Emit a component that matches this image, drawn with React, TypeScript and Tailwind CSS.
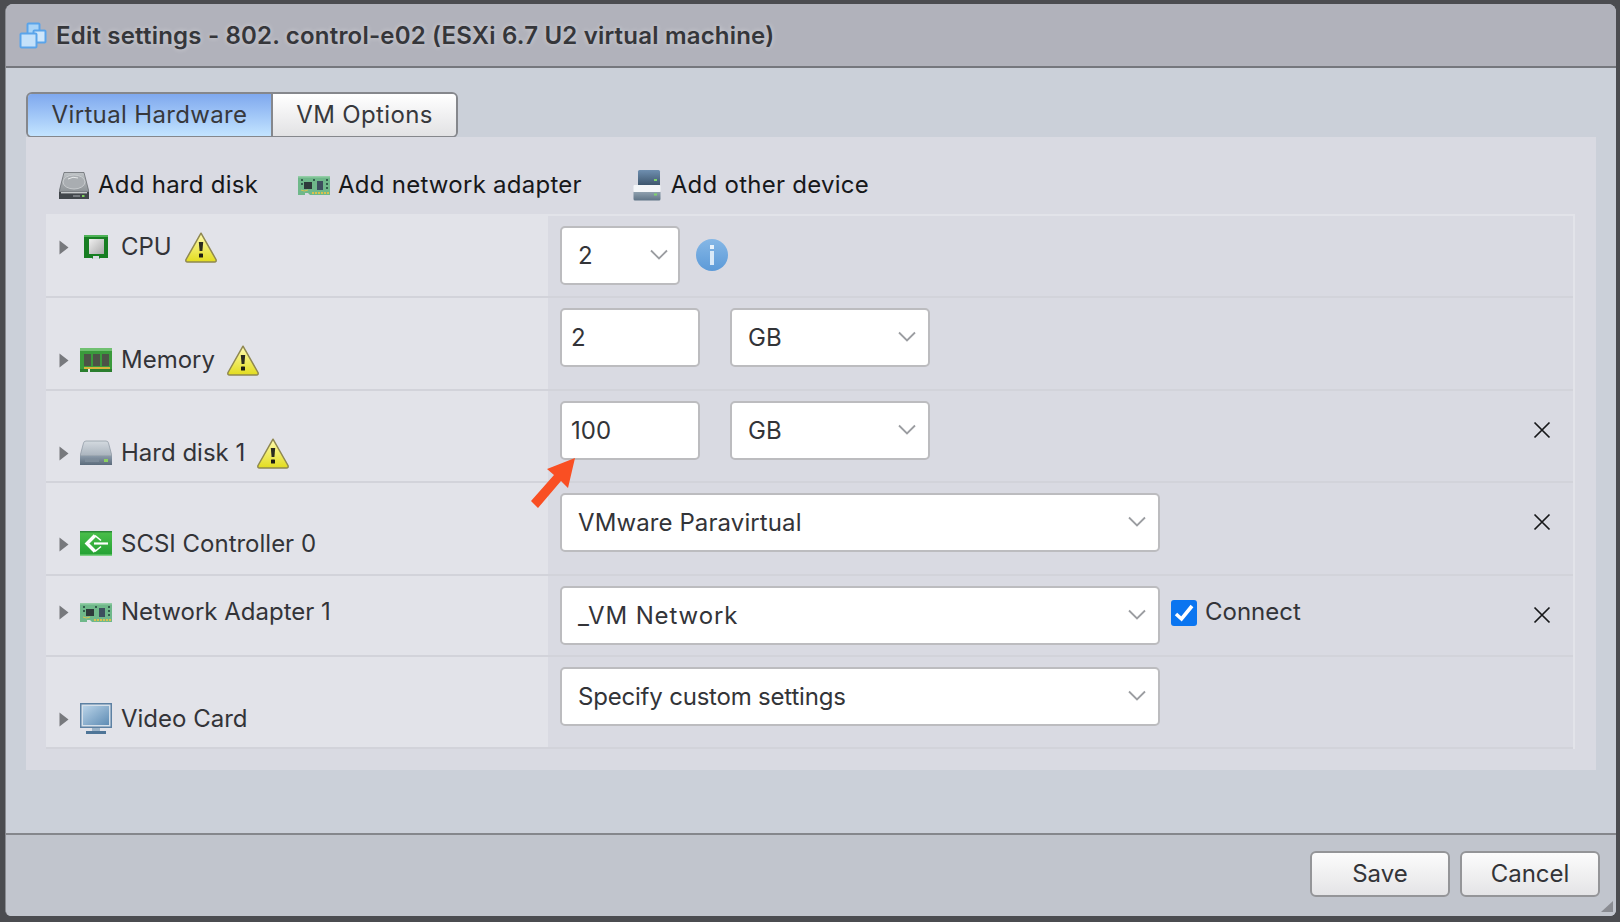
import React from "react";

const F = "font-['Inter','Liberation_Sans',sans-serif]";

function Caret() {
  return (
    <svg width="10" height="15" viewBox="0 0 10 15" className="shrink-0">
      <path d="M0.5 0.5 L9.5 7.5 L0.5 14.5 Z" fill="#77797d" />
    </svg>
  );
}

function Warn({ className = "" }: { className?: string }) {
  return (
    <svg width="32" height="31" viewBox="0 0 32 31" className={"shrink-0 " + className}>
      <defs>
        <linearGradient id="wg" x1="0" y1="0" x2="0" y2="1">
          <stop offset="0" stopColor="#fffbb0" />
          <stop offset="1" stopColor="#e2dc1e" />
        </linearGradient>
      </defs>
      <path d="M16 1.2 L31 27.5 Q31.7 30 29.5 30 L2.5 30 Q0.3 30 1 27.5 Z" fill="url(#wg)" stroke="#8f8850" strokeWidth="1.5" strokeLinejoin="round" />
      <path d="M13.8 10 L18.2 10 L17.4 19 L14.6 19 Z" fill="#2b2b20" />
      <rect x="14" y="21.5" width="4" height="4" rx="0.6" fill="#1d1d14" />
    </svg>
  );
}

function CpuIcon() {
  return (
    <svg width="32" height="26" viewBox="0 0 32 26" className="shrink-0">
      <defs>
        <linearGradient id="cg" x1="0" y1="0" x2="1" y2="1">
          <stop offset="0" stopColor="#f0f0f0" />
          <stop offset="1" stopColor="#a9a9a9" />
        </linearGradient>
      </defs>
      <path d="M4 1 H28 V24 H20 L19 25 H13 L12 24 H4 Z" fill="#177e22" />
      <path d="M4 1 H28 V3 H4 Z" fill="#4eb257" />
      <rect x="9" y="5" width="15" height="15" fill="url(#cg)" />
      <rect x="13" y="22" width="6" height="3" fill="#d8dbe0" />
    </svg>
  );
}

function MemoryIcon() {
  return (
    <svg width="32" height="26" viewBox="0 0 32 26" className="shrink-0">
      <rect x="0" y="1" width="32" height="23" fill="#3a9a3c" />
      <rect x="0" y="1" width="32" height="3" fill="#70c071" />
      <rect x="0" y="22" width="32" height="3" fill="#2a7e2e" />
      <rect x="4" y="7" width="7" height="12" fill="#4c5347" />
      <rect x="13" y="7" width="7" height="12" fill="#4c5347" />
      <rect x="22" y="7" width="7" height="12" fill="#4c5347" />
      <rect x="4" y="20" width="26" height="2" fill="#d7b33c" />
      <rect x="8" y="22" width="2" height="3" fill="#e2e3e9" />
    </svg>
  );
}

function DiskIcon() {
  return (
    <svg width="32" height="26" viewBox="0 0 32 26" className="shrink-0">
      <defs>
        <linearGradient id="dg" x1="0" y1="0" x2="0" y2="1">
          <stop offset="0" stopColor="#d4dae0" />
          <stop offset="1" stopColor="#a9b3bd" />
        </linearGradient>
        <linearGradient id="dg2" x1="0" y1="0" x2="0" y2="1">
          <stop offset="0" stopColor="#8b9aa9" />
          <stop offset="1" stopColor="#5b6b7b" />
        </linearGradient>
      </defs>
      <path d="M6 1 H26 Q28 1 28.5 3 L32 16 H0 L3.5 3 Q4 1 6 1 Z" fill="url(#dg)" stroke="#7d8a96" strokeWidth="0.6" />
      <rect x="0" y="16" width="32" height="9" fill="url(#dg2)" />
      <rect x="5" y="19" width="14" height="3" fill="#7d8c9a" />
      <rect x="24" y="19" width="4" height="3" fill="#8bd060" />
    </svg>
  );
}

function ScsiIcon() {
  return (
    <svg width="32" height="26" viewBox="0 0 32 26" className="shrink-0">
      <defs>
        <linearGradient id="sg" x1="0" y1="0" x2="0" y2="1">
          <stop offset="0" stopColor="#4cc04c" />
          <stop offset="1" stopColor="#22a032" />
        </linearGradient>
      </defs>
      <rect x="0" y="0" width="32" height="25" fill="url(#sg)" />
      <rect x="0" y="0" width="32" height="1.5" fill="#2c8a38" />
      <rect x="0" y="23.5" width="32" height="1.5" fill="#7ccf82" />
      <path d="M15 4.5 L7 12.5 L15 20.5" fill="none" stroke="#ffffff" strokeWidth="3.4" />
      <path d="M15 4.5 L21 9.5 M15 20.5 L21 15.5" fill="none" stroke="#ffffff" strokeWidth="1.6" />
      <path d="M14 12.5 H28" stroke="#ffffff" strokeWidth="2.2" />
    </svg>
  );
}

function NicIcon() {
  return (
    <svg width="32" height="21" viewBox="0 0 32 21" className="shrink-0">
      <path d="M0 1 H32 V20 H12 L10 18 H7 V20 H0 Z" fill="#6fb88a" />
      <rect x="0" y="1" width="32" height="1.5" fill="#93cda6" />
      <rect x="6" y="7" width="8" height="7" fill="#2e3a3a" />
      <rect x="19" y="6" width="6" height="9" fill="#3d4f5e" />
      <path d="M3 5 H5 M3 9 H5 M15 5 H17 M28 5 H30 M28 9 H30 M28 13 H30" stroke="#20403a" strokeWidth="1.4" />
      <path d="M14 18 H32" stroke="#d8c24e" strokeWidth="2" strokeDasharray="2 1" />
      <path d="M3 15 Q6 17 10 15" stroke="#d8c24e" fill="none" strokeWidth="1" />
    </svg>
  );
}

function MonitorIcon() {
  return (
    <svg width="32" height="32" viewBox="0 0 32 32" className="shrink-0">
      <defs>
        <linearGradient id="mg" x1="0" y1="0" x2="1" y2="1">
          <stop offset="0" stopColor="#b9d3e8" />
          <stop offset="1" stopColor="#5e8cb4" />
        </linearGradient>
      </defs>
      <rect x="0" y="0" width="32" height="25" fill="#5d81a3" />
      <rect x="1.5" y="1.5" width="29" height="22" fill="#d5e0ea" />
      <rect x="3" y="3" width="26" height="19" fill="url(#mg)" />
      <rect x="12" y="25" width="8" height="3" fill="#9db4c8" />
      <rect x="6" y="28" width="20" height="3" fill="#4e7597" />
    </svg>
  );
}

function OtherIcon() {
  return (
    <svg width="28" height="31" viewBox="0 0 28 31" className="shrink-0">
      <defs>
        <linearGradient id="og" x1="0" y1="0" x2="0" y2="1">
          <stop offset="0" stopColor="#6f8fb0" />
          <stop offset="1" stopColor="#3e566d" />
        </linearGradient>
        <linearGradient id="og2" x1="0" y1="0" x2="0" y2="1">
          <stop offset="0" stopColor="#8fa0ae" />
          <stop offset="1" stopColor="#5f7486" />
        </linearGradient>
      </defs>
      <path d="M5 1.5 Q5 0 6.5 0 H25.5 Q27 0 27 1.5 V15 H5 Z" fill="url(#og)" />
      <rect x="21" y="9" width="3" height="2" fill="#7ed36a" />
      <rect x="0.5" y="15" width="27" height="7" rx="1" fill="#f4f6f8" />
      <path d="M0.5 22 H27.5 V29 Q27.5 30.5 26 30.5 H2 Q0.5 30.5 0.5 29 Z" fill="url(#og2)" />
      <rect x="21" y="23.5" width="3" height="2" fill="#7ed36a" />
    </svg>
  );
}

function AddDiskIcon() {
  return (
    <svg width="30" height="27" viewBox="0 0 30 27" className="shrink-0">
      <defs>
        <linearGradient id="adg" x1="0" y1="0" x2="0" y2="1">
          <stop offset="0" stopColor="#bfc3c6" />
          <stop offset="1" stopColor="#8d9296" />
        </linearGradient>
      </defs>
      <path d="M5 0.5 H25 L30 20 H0 Z" fill="url(#adg)" stroke="#5c6064" strokeWidth="0.7" />
      <ellipse cx="15" cy="10" rx="11" ry="7" fill="#a9adb1" stroke="#cfd2d4" strokeWidth="0.8" />
      <path d="M9 7 Q14 4 19 6" stroke="#e8eaeb" fill="none" strokeWidth="1" />
      <rect x="0" y="20" width="30" height="7" fill="#41464b" />
      <rect x="2" y="20" width="26" height="1.4" fill="#c7cacc" />
      <rect x="14" y="23" width="7" height="2" fill="#777c81" />
      <rect x="23" y="23" width="2.5" height="2" fill="#7fd25c" />
    </svg>
  );
}

function InfoIcon() {
  return (
    <svg width="32" height="32" viewBox="0 0 32 32" className="shrink-0">
      <defs>
        <linearGradient id="ig" x1="0" y1="0" x2="0" y2="1">
          <stop offset="0" stopColor="#85b7e6" />
          <stop offset="1" stopColor="#5c9ad8" />
        </linearGradient>
      </defs>
      <circle cx="16" cy="16" r="16" fill="url(#ig)" />
      <rect x="14" y="6" width="4" height="4" fill="#e8f2fb" />
      <rect x="14" y="12" width="4" height="14" fill="#d9e9f8" />
    </svg>
  );
}

function VmIcon() {
  return (
    <svg width="28" height="27" viewBox="0 0 28 27" className="shrink-0">
      <rect x="8.5" y="1.5" width="12" height="11" rx="1" fill="#a9d4f7" stroke="#5aa4ea" strokeWidth="2" />
      <rect x="14.5" y="8.5" width="12" height="12" rx="1" fill="#cfe6fa" stroke="#5aa4ea" strokeWidth="2" />
      <rect x="1.5" y="11.5" width="16" height="14" rx="1" fill="#c4e1fa" stroke="#5aa4ea" strokeWidth="2" />
    </svg>
  );
}

function Chevron() {
  return (
    <svg width="18" height="11" viewBox="0 0 18 11" className="mb-[3px] shrink-0">
      <path d="M1 1.5 L9 9.5 L17 1.5" fill="none" stroke="#9b9da1" strokeWidth="1.8" />
    </svg>
  );
}

function Remove() {
  return (
    <svg width="18" height="18" viewBox="0 0 18 18" className="shrink-0">
      <path d="M1.5 1.5 L16.5 16.5 M16.5 1.5 L1.5 16.5" stroke="#17181a" strokeWidth="1.7" />
    </svg>
  );
}

function Select({
  text,
  className,
  textClass = "tracking-[0.1px]",
  pr = "pr-[12px]",
}: {
  text: string;
  className: string;
  textClass?: string;
  pr?: string;
}) {
  return (
    <div className={"flex h-[59px] shrink-0 items-center justify-between rounded-[5px] border-2 border-[#bcbcbf] bg-white pl-[16px] text-[24px] text-[#333438] " + pr + " " + className}>
      <span className={textClass}>{text}</span>
      <Chevron />
    </div>
  );
}

function Input({ text }: { text: string }) {
  return (
    <div className="flex h-[59px] w-[140px] shrink-0 items-center rounded-[5px] border-2 border-[#bcbcbf] bg-white pl-[9px] text-[24px] text-[#333438]">
      {text}
    </div>
  );
}

function Row({
  h,
  labelPad,
  icon,
  label,
  warn,
  children,
  close,
}: {
  h: string;
  labelPad: string;
  icon: React.ReactNode;
  label: string;
  warn?: string;
  children: React.ReactNode;
  close?: boolean;
}) {
  return (
    <div className={"flex border-b-2 border-[#d2d3da] " + h}>
      <div className={"flex w-[502px] shrink-0 items-start bg-[#e2e3e9] pl-[13px] " + labelPad}>
        <div className="flex h-[32px] items-center text-[24px] text-[#333438]">
          <Caret />
          <div className="ml-[11px] flex w-[32px] justify-center">{icon}</div>
          <span className="ml-[9px] whitespace-nowrap">{label}</span>
          {warn ? <Warn className={warn} /> : null}
        </div>
      </div>
      <div className="flex min-w-0 flex-1 items-start pl-[12px] pr-[22px] pt-[10px]">
        {children}
        {close ? (
          <div className="ml-auto mt-[20px]">
            <Remove />
          </div>
        ) : null}
      </div>
    </div>
  );
}

function Btn({ text }: { text: string }) {
  return (
    <div className="flex h-[46px] w-[140px] items-center justify-center rounded-[6px] border-2 border-[#949598] bg-gradient-to-b from-[#fcfcfc] to-[#e4e4e6] text-[24px] text-[#333438]">
      {text}
    </div>
  );
}

export default function App() {
  return (
    <div className={"relative h-[922px] w-[1620px] overflow-hidden bg-[#4b4c50] pl-[5px] pr-[4px] pt-[4px] pb-[6px] " + F}>
      <div className="flex h-full flex-col overflow-hidden rounded-t-[8px] rounded-b-[6px] border-l border-[#8a8c92] bg-[#cbd0d9]">
        <div className="flex h-[64px] shrink-0 items-center border-b-2 border-[#75777d] bg-[#b1b2bb] pl-[13px]">
          <VmIcon />
          <span className="ml-[9px] mt-[2px] text-[24px] font-semibold tracking-[0.2px] text-[#35363a] [text-shadow:0_0_5px_rgba(255,255,255,0.45)]">
            Edit settings - 802. control-e02 (ESXi 6.7 U2 virtual machine)
          </span>
        </div>
        <div className="flex min-h-0 flex-1 flex-col pl-[20px] pr-[20px] pt-[24px]">
          <div className="flex h-[46px] w-[432px] shrink-0 overflow-hidden rounded-[6px] border-2 border-[#85878c] text-[24px] tracking-[0.35px] text-[#37383c]">
            <div className="flex w-[245px] items-center justify-center border-r-2 border-[#85878c] bg-gradient-to-b from-[#7fa8ee] to-[#c3e4ff]">
              Virtual Hardware
            </div>
            <div className="flex flex-1 items-center justify-center bg-gradient-to-b from-[#ffffff] to-[#e2e2e4]">
              VM Options
            </div>
          </div>
          <div className="h-[633px] shrink-0 bg-[#d9dae2] pl-[20px] pr-[21px] pt-[30px] -mt-[1px]">
            <div className="flex h-[36px] items-center text-[24px] tracking-[0.25px] text-[#17181a]">
              <div className="ml-[13px] flex items-center">
                <AddDiskIcon />
                <span className="ml-[9px]">Add hard disk</span>
              </div>
              <div className="ml-[40px] flex items-center">
                <NicIcon />
                <span className="ml-[8px]">Add network adapter</span>
              </div>
              <div className="ml-[51px] flex items-center">
                <OtherIcon />
                <span className="ml-[10px]">Add other device</span>
              </div>
            </div>
            <div className="mt-[11px] border-t-2 border-r-2 border-[#e2e3e9]">
              <Row h="h-[82px]" labelPad="pt-[15px]" icon={<CpuIcon />} label="CPU" warn="ml-[13px]">
                <Select text="2" className="w-[120px]" pr="pr-[10px]" />
                <div className="ml-[16px] mt-[13px]">
                  <InfoIcon />
                </div>
              </Row>
              <Row h="h-[93px]" labelPad="pt-[46px]" icon={<MemoryIcon />} label="Memory" warn="ml-[12px]">
                <Input text="2" />
                <Select text="GB" className="ml-[30px] w-[200px]" />
              </Row>
              <Row h="h-[92px]" labelPad="pt-[46px]" icon={<DiskIcon />} label="Hard disk 1" warn="ml-[12px]" close>
                <Input text="100" />
                <Select text="GB" className="ml-[30px] w-[200px]" />
              </Row>
              <Row h="h-[93px]" labelPad="pt-[45px]" icon={<ScsiIcon />} label="SCSI Controller 0" close>
                <Select text="VMware Paravirtual" className="w-[600px]" />
              </Row>
              <Row h="h-[81px]" labelPad="pt-[20px]" icon={<NicIcon />} label="Network Adapter 1" close>
                <Select text="_VM Network" className="w-[600px]" textClass="tracking-[0.9px]" />
                <div className="ml-[11px] mt-[14px] flex h-[26px] w-[26px] shrink-0 items-center justify-center rounded-[3px] bg-[#0a75f0]">
                  <svg width="20" height="18" viewBox="0 0 20 18">
                    <path d="M2 10 L7.5 15 L18 2" fill="none" stroke="#ffffff" strokeWidth="3.6" />
                  </svg>
                </div>
                <span className="ml-[8px] mt-[11px] text-[24px] leading-[30px] text-[#333438]">Connect</span>
              </Row>
              <Row h="h-[92px]" labelPad="pt-[46px]" icon={<MonitorIcon />} label="Video Card">
                <Select text="Specify custom settings" className="w-[600px]" textClass="tracking-[-0.2px]" />
              </Row>
            </div>
          </div>
          <div className="flex-1" />
        </div>
        <div className="flex h-[83px] shrink-0 items-start justify-end gap-[10px] border-t-2 border-[#85878c] bg-[#c1c5cd] pr-[16px] pt-[16px]">
          <Btn text="Save" />
          <Btn text="Cancel" />
        </div>
      </div>
      <svg width="14" height="12" viewBox="0 0 14 12" className="absolute left-[1600px] top-[901px]">
        <path d="M13 0 L1 11 H13 Z" fill="#8a8c92" />
      </svg>
      <svg width="60" height="60" viewBox="0 0 60 60" className="absolute left-[525px] top-[452px]">
        <path d="M50 6 L43 36 L36 29 L13 56 L6 49 L29 23 L22 17 Z" fill="#f94f23" />
      </svg>
    </div>
  );
}
